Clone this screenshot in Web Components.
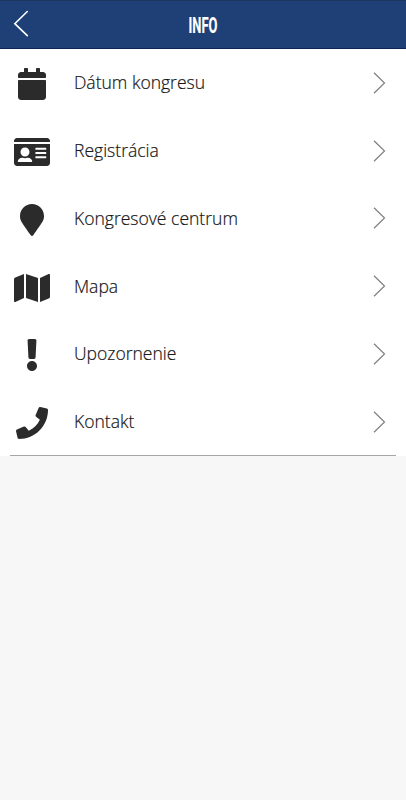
<!DOCTYPE html>
<html lang="sk">
<head>
<meta charset="utf-8">
<meta name="viewport" content="width=device-width, initial-scale=1">
<title>Info</title>
<style>
  body {
    margin: 0;
    min-height: 100vh;
    background-color: #f7f7f7;
    font-family: "Open Sans", sans-serif;
    color: #111;
  }
</style>
</head>
<body>
<info-header>INFO</info-header>
<info-list>
  <info-item icon="calendar">Dátum kongresu</info-item>
  <info-item icon="card">Registrácia</info-item>
  <info-item icon="marker">Kongresové centrum</info-item>
  <info-item icon="map">Mapa</info-item>
  <info-item icon="exclamation">Upozornenie</info-item>
  <info-item icon="phone">Kontakt</info-item>
</info-list>

<script>
const ICONS = {
  calendar: {
    width: 448,
    path: "M12 192h424c6.6 0 12 5.4 12 12v260c0 26.5-21.5 48-48 48H48c-26.5 0-48-21.5-48-48V204c0-6.6 5.4-12 12-12zm436-44v-36c0-26.5-21.5-48-48-48h-48V12c0-6.6-5.4-12-12-12h-40c-6.6 0-12 5.4-12 12v52H160V12c0-6.6-5.4-12-12-12h-40c-6.6 0-12 5.4-12 12v52H48C21.5 64 0 85.5 0 112v36c0 6.6 5.4 12 12 12h424c6.6 0 12-5.4 12-12z"
  },
  card: {
    width: 576,
    path: "M528 32H48C21.5 32 0 53.5 0 80v16h576V80c0-26.5-21.5-48-48-48zM0 432c0 26.5 21.5 48 48 48h480c26.5 0 48-21.5 48-48V128H0v304zM350 186h158q8 0 8 8v16q0 8-8 8H350q-8 0-8-8v-16q0-8 8-8zM350 254h158q8 0 8 8v16q0 8-8 8H350q-8 0-8-8v-16q0-8 8-8zM350 322h158q8 0 8 8v16q0 8-8 8H350q-8 0-8-8v-16q0-8 8-8zM176 184c39.8 0 72 32.2 72 72s-32.2 72-72 72-72-32.2-72-72 32.2-72 72-72zM61 398C69 368 96 346 128 346h8.2c12.3 5.1 25.7 8 39.8 8s27.6-2.9 39.8-8h8.2c32 0 59 22 67 52 3.2 9.9-5.2 19.8-15.6 19.8H76.6c-10.4 0-18.8-10-15.6-19.8z"
  },
  marker: {
    width: 384,
    path: "M172.268 501.67C26.97 291.031 0 269.413 0 192 0 85.961 85.961 0 192 0s192 85.961 192 192c0 77.413-26.97 99.031-172.268 309.67-9.535 13.774-29.93 13.773-39.464 0z"
  },
  map: {
    width: 576,
    path: "M0 117.66v346.32c0 11.32 11.43 19.06 21.94 14.86L160 416V32L20.12 87.95A32.006 32.006 0 0 0 0 117.66zM192 416l192 64V96L192 32v384zM554.06 33.16L416 96v384l139.88-55.95A31.996 31.996 0 0 0 576 394.34V48.02c0-11.32-11.43-19.06-21.94-14.86z"
  },
  exclamation: {
    width: 192,
    path: "M176 432c0 44.112-35.888 80-80 80s-80-35.888-80-80 35.888-80 80-80 80 35.888 80 80zM25.26 25.199l13.6 272C39.499 309.972 50.041 320 62.83 320h66.34c12.789 0 23.331-10.028 23.97-22.801l13.6-272C167.425 11.49 156.496 0 142.77 0H49.23C35.504 0 24.575 11.49 25.26 25.199z"
  },
  phone: {
    width: 512,
    path: "M493.4 24.6l-104-24c-11.3-2.6-22.9 3.3-27.5 13.9l-48 112c-4.2 9.8-1.4 21.3 6.9 28l60.6 49.6c-36 76.7-98.9 140.5-177.2 177.2l-49.6-60.6c-6.8-8.3-18.2-11.1-28-6.9l-112 48C3.9 366.5-2 378.1.6 389.4l24 104C27.1 504.2 36.7 512 48 512c256.1 0 464-207.5 464-464 0-11.2-7.7-20.9-18.6-23.4z"
  }
};

class InfoHeader extends HTMLElement {
  constructor() {
    super();
    this.attachShadow({ mode: "open" });
  }

  static get styles() {
    return /* css */ `
      :host {
        display: grid;
        grid-template-columns: 48px 1fr 48px;
        align-items: center;
        height: 49px;
        box-sizing: border-box;
        border-top: 1px solid #1b365f;
        border-bottom: 1px solid #0d2655;
        background-color: #1f4076;
        color: #fff;
      }

      .back {
        display: block;
        padding-left: 13px;
        height: 29px;
      }

      .title {
        margin: 0;
        padding-top: 2px;
        font-family: Roboto, sans-serif;
        font-size: 21.5px;
        font-weight: 700;
        line-height: 24px;
        text-align: center;
        -webkit-text-stroke: 0.2px #fff;
        transform: scaleX(0.6);
      }
    `;
  }

  connectedCallback() {
    this.shadowRoot.innerHTML = /* html */ `
    <style>${InfoHeader.styles}</style>
    <a class="back">
      <svg width="16" height="28" viewBox="0 0 16 28" fill="none" stroke="#fff" stroke-width="1.6" stroke-linecap="round">
        <path d="M14.3 1.5L1.8 13.7L14.3 25.7" />
      </svg>
    </a>
    <h1 class="title"><slot></slot></h1>
    `;
  }
}

class InfoList extends HTMLElement {
  constructor() {
    super();
    this.attachShadow({ mode: "open" });
  }

  static get styles() {
    return /* css */ `
      :host {
        display: block;
        background-color: #fff;
      }

      .list {
        display: grid;
        grid-template-rows: repeat(6, 67.8px);
        height: 406px;
      }

      .line {
        height: 1px;
        margin: 0 10px;
        background-color: #a6a6a6;
      }
    `;
  }

  connectedCallback() {
    this.shadowRoot.innerHTML = /* html */ `
    <style>${InfoList.styles}</style>
    <div class="list"><slot></slot></div>
    <div class="line"></div>
    `;
  }
}

class InfoItem extends HTMLElement {
  constructor() {
    super();
    this.attachShadow({ mode: "open" });
  }

  static get styles() {
    return /* css */ `
      :host {
        display: grid;
        grid-template-columns: 36px 1fr 14px;
        align-items: center;
        padding: 0 20px 0 13.7px;
        font-size: 17.55px;
        font-weight: 300;
        line-height: 24px;
      }

      .icon {
        justify-self: center;
        margin-top: 2.5px;
        fill: #2b2b2b;
        fill-rule: evenodd;
      }

      .label {
        padding: 0 0 1.4px 24.3px;
        -webkit-text-stroke: 0.2px #222;
      }
    `;
  }

  connectedCallback() {
    const icon = ICONS[this.getAttribute("icon")];
    this.shadowRoot.innerHTML = /* html */ `
    <style>${InfoItem.styles}</style>
    <svg class="icon" width="${icon.width / 16}" height="32" viewBox="0 0 ${icon.width} 512">
      <path d="${icon.path}" />
    </svg>
    <span class="label"><slot></slot></span>
    <svg width="14" height="24" viewBox="0 0 14 24" fill="none" stroke="#808080" stroke-width="1.2">
      <path d="M2 1.7L12.5 12L2 22.3" />
    </svg>
    `;
  }
}

customElements.define("info-header", InfoHeader);
customElements.define("info-list", InfoList);
customElements.define("info-item", InfoItem);
</script>
</body>
</html>
